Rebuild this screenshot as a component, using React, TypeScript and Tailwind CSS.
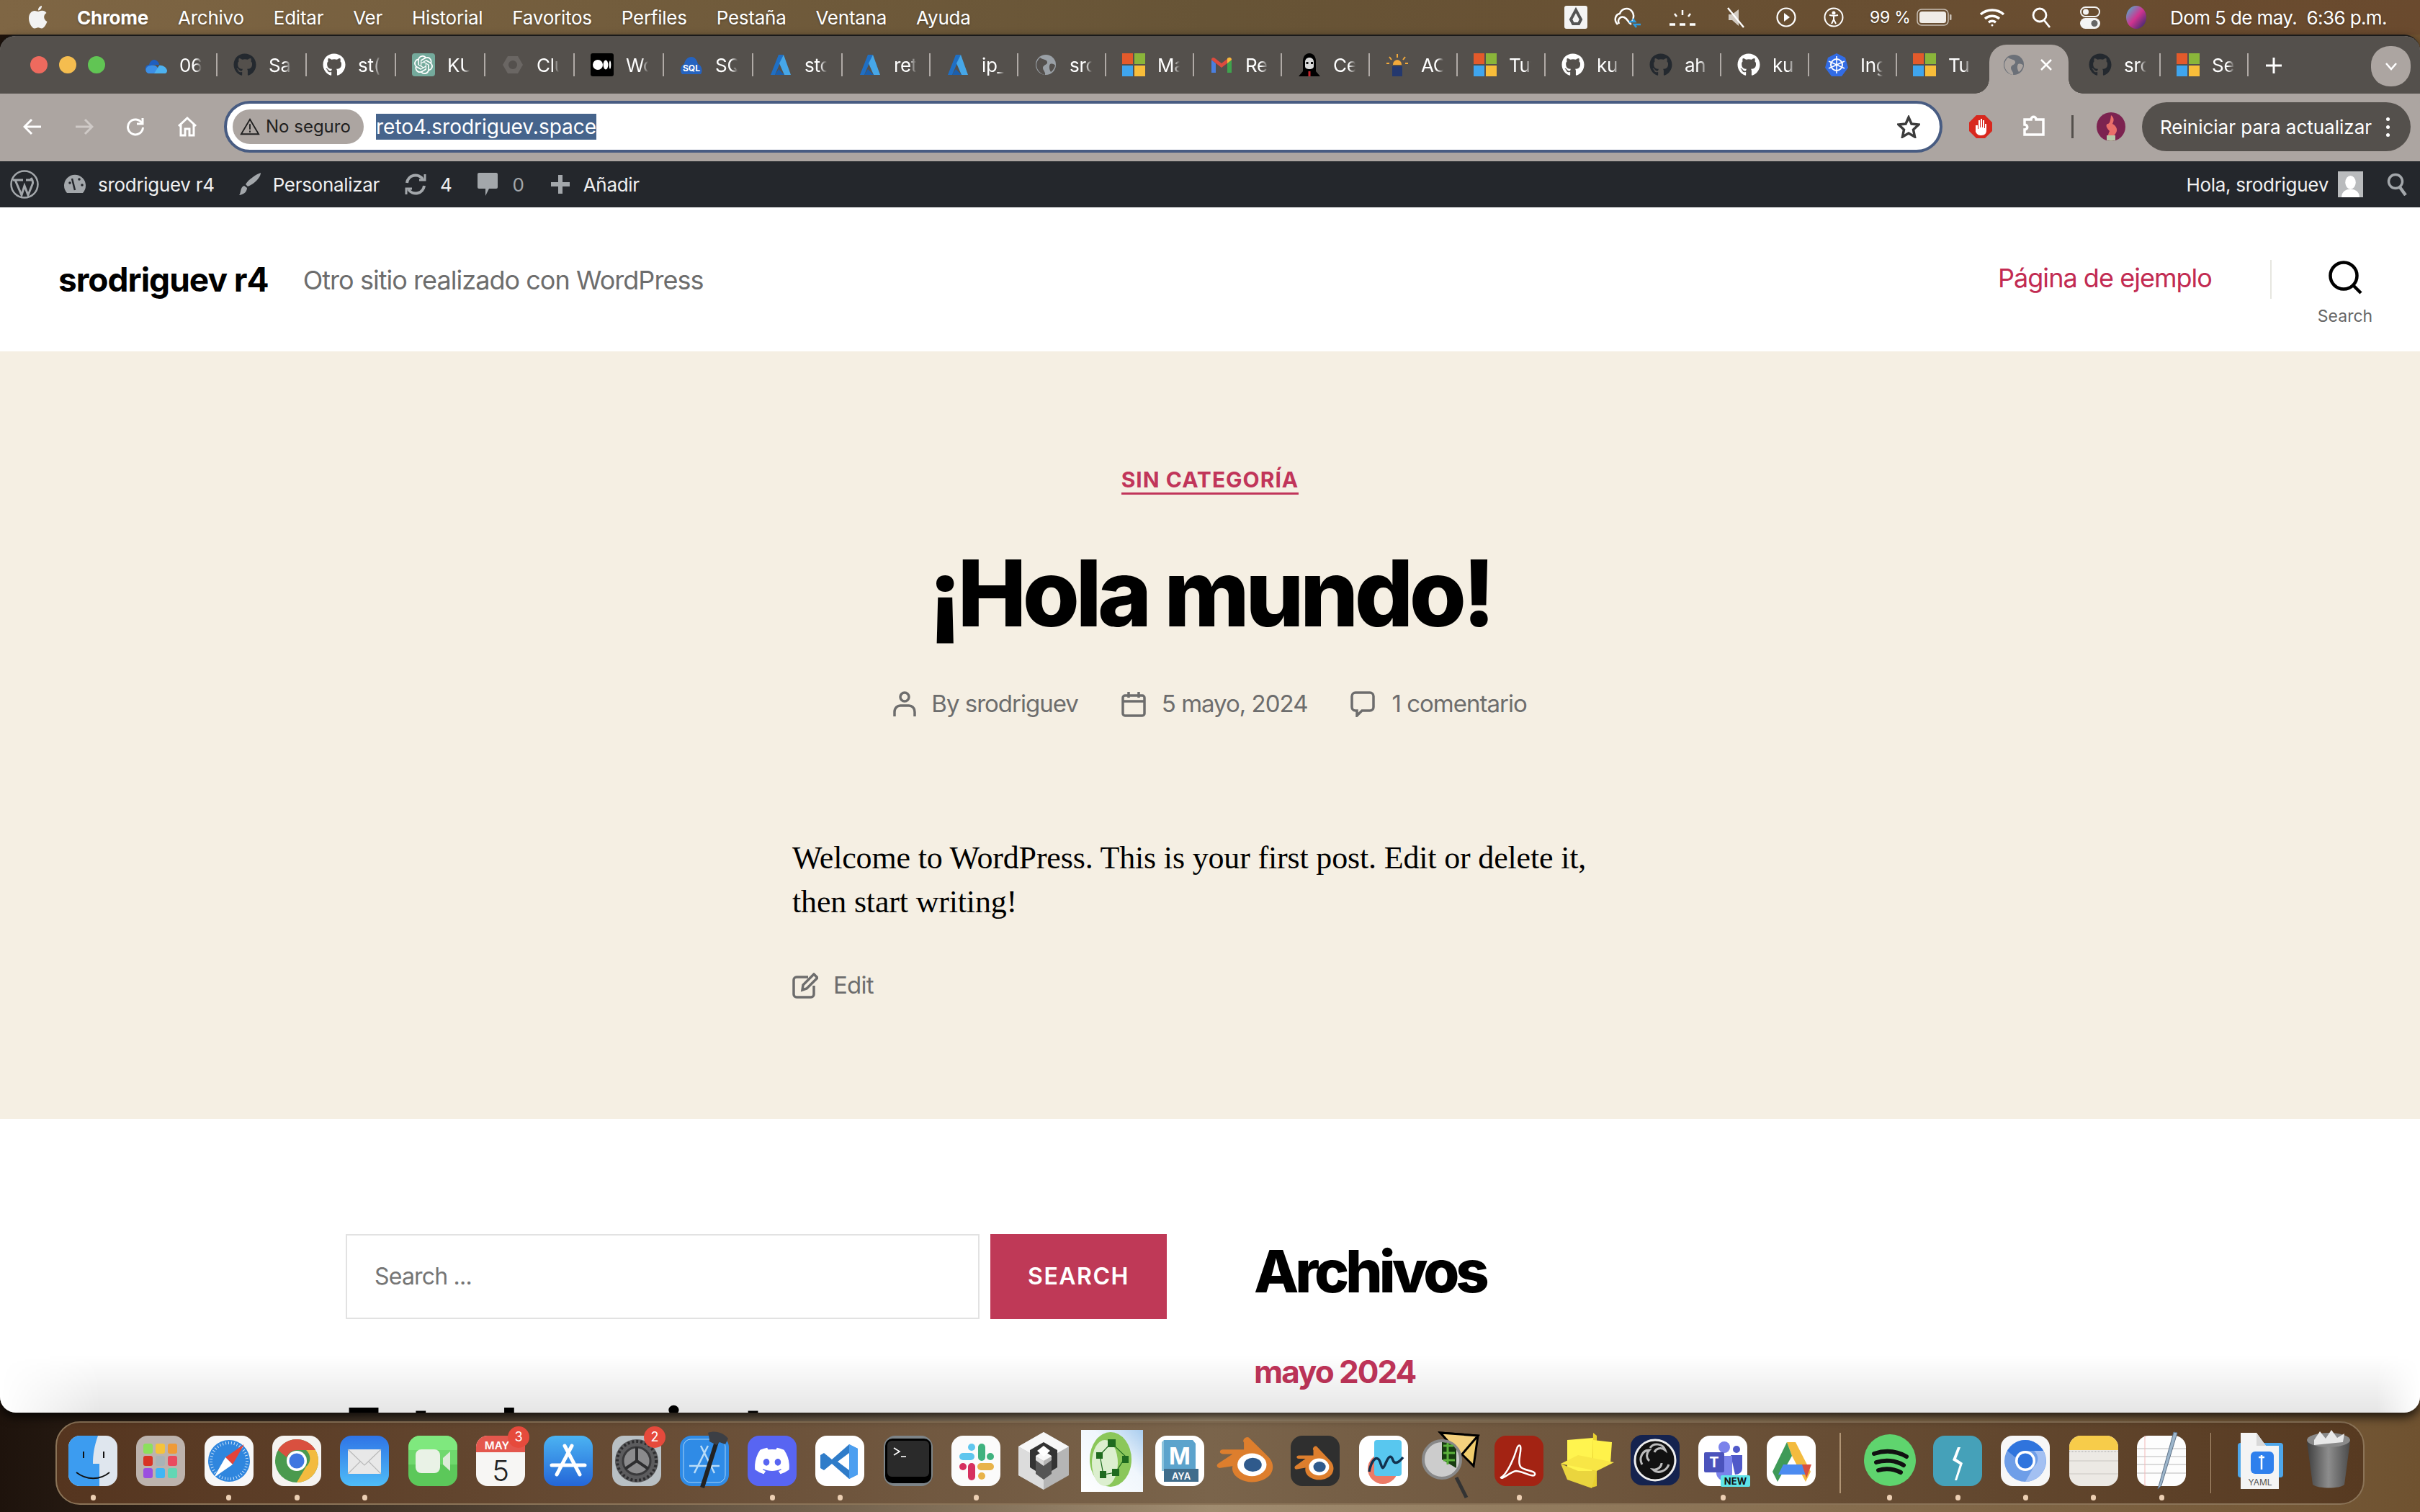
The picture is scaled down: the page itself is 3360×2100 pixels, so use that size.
import type { ReactNode } from 'react';
import { FaGithub, FaDiscord } from 'react-icons/fa';
import { SiOpenai } from 'react-icons/si';

const MS = () => (
  <svg viewBox="0 0 32 32" className="w-[32px] h-[32px]">
    <rect x="0" y="0" width="15" height="15" fill="#e35a2b" />
    <rect x="17" y="0" width="15" height="15" fill="#8ab53a" />
    <rect x="0" y="17" width="15" height="15" fill="#3fa5ee" />
    <rect x="17" y="17" width="15" height="15" fill="#f8bd3a" />
  </svg>
);
const GhWhite = () => <FaGithub className="w-[32px] h-[32px] text-white" />;
const GhDark = () => <FaGithub className="w-[32px] h-[32px] text-[#24292f]" />;
const Azure = () => (
  <svg viewBox="0 0 32 32" className="w-[32px] h-[32px]">
    <path d="M13 2h7L8 30H2z" fill="#1f6fc4" />
    <path d="M20 2l10 28h-9L14 14z" fill="#46a7e8" />
    <path d="M13 22l8 8H8z" fill="#1b5fae" />
  </svg>
);
const Globe = ({ dark }: { dark?: boolean }) => (
  <svg viewBox="0 0 32 32" className="w-[32px] h-[32px]">
    <circle cx="16" cy="16" r="14" fill={dark ? '#6b7078' : '#9aa0a6'} />
    <path d="M8 6c4 3 9 2 10 6s-6 4-6 8 4 6 3 10c-6-1-12-7-12-14 0-4 2-7 5-10z" fill={dark ? '#aca5a1' : '#54504d'} />
    <path d="M22 15c3-1 6 0 7 2-1 3-3 7-6 9-2-3-3-8-1-11z" fill={dark ? '#aca5a1' : '#54504d'} />
  </svg>
);

const TABS: { icon: ReactNode; title: string; w: string }[] = [
  {
    title: '06',
    w: 'w-[124px]',
    icon: (
      <svg viewBox="0 0 32 32" className="w-[32px] h-[32px]">
        <path d="M4 26c-4-4-2-10 3-10 1-5 6-9 10-6 3 2 4 4 4 6H12z" fill="#1f5fbf" />
        <path d="M6 28c-6-2-4-11 3-11 3-1 7-1 9 2l6 9z" fill="#3c8fe6" />
        <path d="M14 28l7-11c4-1 10 2 11 7 0 2-1 4-3 4z" fill="#4db2f0" />
      </svg>
    ),
  },
  { title: 'Sa', w: 'w-[124px]', icon: <GhDark /> },
  { title: 'st(', w: 'w-[124px]', icon: <GhWhite /> },
  {
    title: 'KU',
    w: 'w-[124px]',
    icon: (
      <div className="w-[32px] h-[32px] rounded-[4px] bg-[#74aa9c] flex items-center justify-center">
        <SiOpenai className="w-[26px] h-[26px] text-white" />
      </div>
    ),
  },
  {
    title: 'Clu',
    w: 'w-[124px]',
    icon: (
      <svg viewBox="0 0 32 32" className="w-[32px] h-[32px]">
        <path d="M9 4h14l7 12-7 12H9L2 16z" fill="#6a6663" />
        <circle cx="16" cy="16" r="6" fill="#54504d" />
      </svg>
    ),
  },
  {
    title: 'Wo',
    w: 'w-[124px]',
    icon: (
      <svg viewBox="0 0 32 32" className="w-[32px] h-[32px]">
        <rect width="32" height="32" rx="3" fill="#000" />
        <ellipse cx="10" cy="16" rx="7" ry="7" fill="#fff" />
        <ellipse cx="21" cy="16" rx="3.4" ry="6.5" fill="#fff" />
        <ellipse cx="27" cy="16" rx="1.3" ry="5.8" fill="#fff" />
      </svg>
    ),
  },
  {
    title: 'SQ',
    w: 'w-[124px]',
    icon: (
      <svg viewBox="0 0 32 32" className="w-[32px] h-[32px]">
        <path d="M3 29c-3-3-3-12 3-14 1-6 5-10 10-10s8 5 9 10c6 2 7 11 4 14z" fill="#2563c0" />
        <text x="16" y="25" textAnchor="middle" fontSize="12" fontWeight="700" fill="#fff" fontFamily="Inter, sans-serif">SQL</text>
      </svg>
    ),
  },
  { title: 'sto', w: 'w-[124px]', icon: <Azure /> },
  { title: 'ret', w: 'w-[122px]', icon: <Azure /> },
  { title: 'ip_', w: 'w-[122px]', icon: <Azure /> },
  { title: 'src', w: 'w-[122px]', icon: <Globe /> },
  { title: 'Ma', w: 'w-[122px]', icon: <MS /> },
  {
    title: 'Re',
    w: 'w-[122px]',
    icon: (
      <svg viewBox="0 0 32 32" className="w-[32px] h-[32px]">
        <path d="M2 27V9l6 5v13z" fill="#4a7fe0" />
        <path d="M24 27V14l6-5v18z" fill="#3fa34d" />
        <path d="M2 9c0-3 3-4 5-2l9 7 9-7c2-2 5-1 5 2l-14 11z" fill="#dd4b3e" />
        <path d="M24 14l6-5c0-2-2-4-4-3l-2 1z" fill="#f4b93e" />
      </svg>
    ),
  },
  {
    title: 'Ce',
    w: 'w-[122px]',
    icon: (
      <svg viewBox="0 0 32 32" className="w-[32px] h-[32px]">
        <path d="M16 0c6 0 9 5 9 11v14l6 7H1l6-7V11C7 5 10 0 16 0z" fill="#000" />
        <path d="M10 12c0-4 3-6 6-6s6 2 6 6v6c0 3-3 4-6 4s-6-1-6-4z" fill="#d9d9d9" />
        <rect x="11.5" y="12" width="3" height="3" fill="#111" />
        <rect x="18" y="12" width="3" height="3" fill="#111" />
        <rect x="14.5" y="25" width="3" height="7" fill="#c9252c" />
      </svg>
    ),
  },
  {
    title: 'AC',
    w: 'w-[122px]',
    icon: (
      <svg viewBox="0 0 32 32" className="w-[32px] h-[32px]">
        <rect x="9" y="18" width="14" height="14" fill="#24386e" />
        <path d="M10 16c0-9 12-9 12 0z" fill="#f2a93b" />
        <path d="M16 1v5M5 5l3 4M27 5l-3 4M1 14h4M27 14h4" stroke="#f2a93b" strokeWidth="2" />
      </svg>
    ),
  },
  { title: 'Tut', w: 'w-[122px]', icon: <MS /> },
  { title: 'ku', w: 'w-[122px]', icon: <GhWhite /> },
  { title: 'ah', w: 'w-[122px]', icon: <GhDark /> },
  { title: 'ku', w: 'w-[122px]', icon: <GhWhite /> },
  {
    title: 'Ing',
    w: 'w-[122px]',
    icon: (
      <svg viewBox="0 0 32 32" className="w-[32px] h-[32px]">
        <path d="M16 0l12 6 4 14-9 12H9L0 20 4 6z" fill="#326ce5" />
        <circle cx="16" cy="16" r="8" fill="none" stroke="#fff" strokeWidth="2" />
        <path d="M16 4v24M5 11l22 10M27 11L5 21" stroke="#fff" strokeWidth="1.6" />
      </svg>
    ),
  },
];

const DOCK_TILE = { x: 13, y: 16, width: 68, height: 70, rx: 16 };

const Badge = ({ n, x }: { n: string; x: number }) => (
  <g>
    <circle cx={x} cy="18" r="15" fill="#e64a3c" />
    <text x={x} y="24" textAnchor="middle" fontSize="18" fill="#fff" fontFamily="Inter, sans-serif">{n}</text>
  </g>
);

const BlenderGlyph = ({ sx, sy, ox, oy }: { sx: number; sy: number; ox: number; oy: number }) => (
  <g transform={`translate(${ox} ${oy}) scale(${sx} ${sy})`}>
    <path d="M40 12l24 30c6 8 8 18 3 28-6 10-20 15-31 11-12-4-18-14-16-24L5 60c-4 1-6-4-3-7l18-15H8c-5 0-5-7 0-7h26L34 20c-3-4 3-11 6-8z" fill="#dd7e2d" />
    <circle cx="44" cy="55" r="18" fill="#fff" />
    <circle cx="45" cy="55" r="11" fill="#2f5a8c" />
  </g>
);

const DOCK: { key: string; dot?: boolean; art: ReactNode }[] = [
  {
    key: 'finder',
    dot: true,
    art: (
      <>
        <rect {...DOCK_TILE} fill="#dfe6ee" />
        <path d="M29 16h25c-5 14-7 26-7 39h9v31H29a16 16 0 0 1-16-16V32a16 16 0 0 1 16-16z" fill="#3c9cf0" />
        <path d="M24 67c14 11 33 11 46 0" fill="none" stroke="#111" strokeWidth="1.8" />
        <rect x="33" y="38" width="2" height="9" fill="#111" />
        <rect x="61" y="38" width="2" height="9" fill="#111" />
      </>
    ),
  },
  {
    key: 'launchpad',
    art: (
      <>
        <rect {...DOCK_TILE} fill="#bdb3ad" />
        {[
          ['#8ce05c', 23, 27], ['#f5c33b', 40, 27], ['#ef9a36', 57, 27],
          ['#d83325', 23, 44], ['#a9b3b6', 40, 44], ['#ea4a5f', 57, 44],
          ['#9b4fe0', 23, 61], ['#3fb6f5', 40, 61], ['#62d6b4', 57, 61],
        ].map(([c, x, y]) => (
          <rect key={`${x}-${y}`} x={x as number} y={y as number} width="13" height="14" rx="3" fill={c as string} />
        ))}
      </>
    ),
  },
  {
    key: 'safari',
    dot: true,
    art: (
      <>
        <rect {...DOCK_TILE} fill="#f7f7f7" />
        <circle cx="47" cy="51" r="29" fill="#2f86de" />
        <circle cx="47" cy="51" r="25" fill="none" stroke="#cfe4f8" strokeWidth="4" strokeDasharray="1 3" />
        <path d="M68 28L42 46l10 10z" fill="#e5433a" />
        <path d="M26 74l16-28 10 10z" fill="#fff" />
      </>
    ),
  },
  {
    key: 'chrome',
    dot: true,
    art: (
      <>
        <rect {...DOCK_TILE} fill="#f5f3f0" />
        <circle cx="47" cy="51" r="30" fill="#4a9a4e" />
        <path d="M47 21a30 30 0 0 1 26 15H47a15 15 0 0 0-14 10L21 36a30 30 0 0 1 26-15z" fill="#d9503f" />
        <path d="M73 36a30 30 0 0 1-26 45l13-22a15 15 0 0 0 0-23z" fill="#f3bb3f" />
        <circle cx="47" cy="51" r="14" fill="#fff" />
        <circle cx="47" cy="51" r="10.5" fill="#3f76e0" />
      </>
    ),
  },
  {
    key: 'mail',
    dot: true,
    art: (
      <>
        <defs>
          <linearGradient id="mailg" x1="0" y1="0" x2="0" y2="1">
            <stop offset="0" stopColor="#2f74e6" />
            <stop offset="1" stopColor="#4fbdf8" />
          </linearGradient>
        </defs>
        <rect {...DOCK_TILE} fill="url(#mailg)" />
        <rect x="24" y="35" width="46" height="34" rx="2" fill="#e8e8e8" />
        <path d="M24 35l23 22 23-22M24 69l17-17M70 69L53 52" fill="none" stroke="#b9b9b9" strokeWidth="1.2" />
      </>
    ),
  },
  {
    key: 'facetime',
    art: (
      <>
        <rect {...DOCK_TILE} fill="#5cc85a" />
        <rect {...DOCK_TILE} height="34" fill="#7fe87e" />
        <rect x="13" y="36" width="68" height="20" fill="#6fd86d" />
        <rect x="23" y="35" width="34" height="33" rx="8" fill="#e9f2e6" />
        <path d="M61 47l10-9v27l-10-9z" fill="#dcebd8" />
      </>
    ),
  },
  {
    key: 'calendar',
    art: (
      <>
        <rect {...DOCK_TILE} fill="#f7f6f4" />
        <path d="M13 39V32a16 16 0 0 1 16-16h36a16 16 0 0 1 16 16v7z" fill="#e4574d" />
        <text x="42" y="35" textAnchor="middle" fontSize="15" fontWeight="600" fill="#fff" fontFamily="Inter, sans-serif">MAY</text>
        <text x="47" y="79" textAnchor="middle" fontSize="40" fontWeight="300" fill="#222" fontFamily="Inter, sans-serif">5</text>
        <Badge n="3" x={72} />
      </>
    ),
  },
  {
    key: 'appstore',
    art: (
      <>
        <defs>
          <linearGradient id="asg" x1="0" y1="0" x2="0" y2="1">
            <stop offset="0" stopColor="#4bb3f2" />
            <stop offset="1" stopColor="#2466d8" />
          </linearGradient>
        </defs>
        <rect {...DOCK_TILE} fill="url(#asg)" />
        <path d="M52 30L31 70M42 30l21 40M24 57h46" stroke="#fff" strokeWidth="5" strokeLinecap="round" fill="none" />
      </>
    ),
  },
  {
    key: 'settings',
    art: (
      <>
        <rect {...DOCK_TILE} fill="#b9c0c4" />
        <circle cx="47" cy="51" r="30" fill="#5c5c5e" />
        <circle cx="47" cy="51" r="27" fill="none" stroke="#2d2d2f" strokeWidth="4" strokeDasharray="3 3" />
        <circle cx="47" cy="51" r="19" fill="#8b8b8d" stroke="#3a3a3c" strokeWidth="3" />
        <path d="M47 51V32M47 51L31 62M47 51l16 11" stroke="#2d2d2f" strokeWidth="4" />
        <Badge n="2" x={72} />
      </>
    ),
  },
  {
    key: 'xcode',
    art: (
      <>
        <rect {...DOCK_TILE} fill="#2f8be6" />
        <rect x="18" y="21" width="58" height="60" rx="10" fill="none" stroke="#a8d3f7" strokeWidth="1" />
        <path d="M52 30L33 68M42 30l19 38M26 58h42" stroke="#b8dcf8" strokeWidth="2.5" fill="none" />
        <path d="M44 88L66 18" stroke="#222" strokeWidth="6" />
        <path d="M52 12c10-4 22 0 28 8l-4 8-8-3-4 4-10-5c0-5-1-8-2-12z" fill="#3c3f45" />
      </>
    ),
  },
  {
    key: 'discord',
    dot: true,
    art: (
      <>
        <rect {...DOCK_TILE} fill="#5865f2" />
        <foreignObject x="21" y="25" width="52" height="52">
          <FaDiscord className="w-[52px] h-[52px] text-white" />
        </foreignObject>
      </>
    ),
  },
  {
    key: 'vscode',
    dot: true,
    art: (
      <>
        <rect {...DOCK_TILE} fill="#fff" />
        <path d="M60 28l12 6v36l-12 6-24-21-11 9-5-3V43l5-3 11 9z" fill="#2f7cc9" />
        <path d="M60 28l12 6v36l-12 6z" fill="#4c9ff0" />
        <path d="M60 40v24L44 52z" fill="#fff" />
      </>
    ),
  },
  {
    key: 'terminal',
    art: (
      <>
        <rect {...DOCK_TILE} fill="#7d8488" />
        <rect x="15" y="20" width="64" height="62" rx="10" fill="#000" />
        <rect x="18" y="23" width="58" height="50" rx="6" fill="#2a2a2a" />
        <path d="M27 33l8 5-8 5" fill="none" stroke="#fff" strokeWidth="1.6" />
        <path d="M37 45h7" stroke="#fff" strokeWidth="1.6" />
      </>
    ),
  },
  {
    key: 'slack',
    dot: true,
    art: (
      <>
        <rect {...DOCK_TILE} fill="#fbfbfb" />
        <rect x="24" y="40" width="21" height="10" rx="5" fill="#5fc6ee" />
        <rect x="36" y="27" width="10" height="10" rx="5" fill="#5fc6ee" />
        <rect x="50" y="27" width="10" height="24" rx="5" fill="#3fb27f" />
        <rect x="62" y="40" width="10" height="10" rx="5" fill="#3fb27f" />
        <rect x="49" y="54" width="23" height="10" rx="5" fill="#e8b34a" />
        <rect x="50" y="67" width="10" height="10" rx="5" fill="#e8b34a" />
        <rect x="36" y="54" width="10" height="24" rx="5" fill="#d6305f" />
        <rect x="24" y="54" width="10" height="10" rx="5" fill="#d6305f" />
      </>
    ),
  },
  {
    key: 'unity',
    art: (
      <>
        <path d="M47 11l35 20v40L47 91 12 71V31z" fill="#b5b5b5" />
        <path d="M47 11l35 20-35 20-35-20z" fill="#f7f7f7" />
        <path d="M12 31l35 20v40L12 71z" fill="#dcdcdc" />
        <path d="M47 25l19 11v24l-8 5V44l-11-7-11 7v21l-8-5V36z" fill="#333" />
        <path d="M47 30l9 7-9 8-9-8z" fill="#fff" />
        <path d="M36 50l11 8 11-8v19l-11 8-11-8z" fill="#555" />
      </>
    ),
  },
  {
    key: 'mesh',
    art: (
      <>
        <defs>
          <linearGradient id="meshbg" x1="0" y1="1" x2="1" y2="0">
            <stop offset="0" stopColor="#ffffff" />
            <stop offset="0.6" stopColor="#f0f6fc" />
            <stop offset="1" stopColor="#a9cdef" />
          </linearGradient>
        </defs>
        <rect x="4" y="8" width="86" height="86" fill="url(#meshbg)" />
        <ellipse cx="45" cy="49" rx="29" ry="38" fill="#8bc75a" />
        <ellipse cx="37" cy="54" rx="18" ry="32" fill="#dcefcf" />
        <path d="M46 26L30 43l5 27 17-3 14-22z" fill="none" stroke="#1f6b1f" strokeWidth="1.2" />
        <rect x="41" y="21" width="11" height="11" fill="#1f6b1f" />
        <rect x="25" y="39" width="9" height="9" fill="#1f6b1f" />
        <rect x="61" y="44" width="9" height="10" fill="#1f6b1f" />
        <rect x="30" y="65" width="9" height="10" fill="#1f6b1f" />
        <rect x="47" y="62" width="10" height="10" fill="#1f6b1f" />
      </>
    ),
  },
  {
    key: 'maya',
    art: (
      <>
        <rect {...DOCK_TILE} fill="#fff" />
        <path d="M25 22h40l4 5v36H25z" fill="#5ca3cc" />
        <path d="M25 22l-3 3v40h3z" fill="#8cc3dc" />
        <rect x="25" y="62" width="48" height="18" fill="#3f6d8c" />
        <text x="47" y="56" textAnchor="middle" fontSize="32" fontWeight="700" fill="#fff" fontFamily="Inter, sans-serif">M</text>
        <text x="49" y="77" textAnchor="middle" fontSize="13" fontWeight="600" fill="#fff" fontFamily="Inter, sans-serif">AYA</text>
      </>
    ),
  },
  { key: 'blender', art: <BlenderGlyph sx={1.12} sy={0.88} ox={4} oy={8} /> },
  {
    key: 'blender2',
    art: (
      <>
        <rect {...DOCK_TILE} fill="#2f2f2f" />
        <BlenderGlyph sx={0.78} sy={0.66} ox={18} oy={23} />
      </>
    ),
  },
  {
    key: 'freeform',
    art: (
      <>
        <rect {...DOCK_TILE} fill="#fff" />
        <circle cx="46" cy="62" r="21" fill="#ec7a66" />
        <rect x="34" y="22" width="38" height="50" rx="4" fill="#58c7ef" />
        <path d="M27 66c4-20 12-22 15-14s3 14 8 2 8-10 10-4 8 4 14-4" fill="none" stroke="#12324f" strokeWidth="3.5" />
      </>
    ),
  },
  {
    key: 'magnifier',
    art: (
      <>
        <path d="M32 12l52 4-6 42-46-46z" fill="#f0cc6c" stroke="#000" strokeWidth="3" />
        <path d="M32 12l52 4-24 28z" fill="#f4d17e" stroke="#000" strokeWidth="3" />
        <circle cx="34" cy="49" r="26" fill="#ccc" stroke="#888" strokeWidth="4" />
        <path d="M34 25a24 24 0 0 1 20 10v26L34 49z" fill="#173c10" />
        <path d="M36 30h14M36 40h16M36 50h16M42 26v30" stroke="#5cb23c" strokeWidth="3" />
        <path d="M54 74l14 28" stroke="#333" strokeWidth="5" />
      </>
    ),
  },
  {
    key: 'acrobat',
    dot: true,
    art: (
      <>
        <rect {...DOCK_TILE} fill="#a32313" />
        <path d="M22 74c8-4 18-26 22-40 1-4 4-6 5-3 2 8-5 20 0 28 4 6 22 5 20 11-2 5-14-4-26-5-8 1-20 13-21 9z" fill="none" stroke="#fff" strokeWidth="2.5" />
      </>
    ),
  },
  {
    key: 'sticky',
    art: (
      <>
        <path d="M19 22l36-3 2 62-38-4z" fill="#fff44f" />
        <path d="M55 12l5 4v70l-7 2z" fill="#e8d030" />
        <path d="M55 22l26 3-2 30-24-2z" fill="#fff24a" />
        <path d="M10 55l24-12 50 10-24 12z" fill="#f8e646" />
        <path d="M10 55l24 10 26 0-7 24-34-12z" fill="#ead53e" />
      </>
    ),
  },
  {
    key: 'obs',
    art: (
      <>
        <rect x="13" y="15" width="68" height="70" rx="16" fill="#15234f" />
        <circle cx="47" cy="50" r="28" fill="#111" stroke="#eee" strokeWidth="3" />
        <path d="M40 33c5-8 18-6 21 3-6-5-13-2-15 3M66 56c-3 9-15 14-22 7 7 1 12-4 12-9M29 56c-5-8 0-20 10-20-5 5-4 12 0 15" fill="none" stroke="#bbb" strokeWidth="3" />
      </>
    ),
  },
  {
    key: 'teams',
    dot: true,
    art: (
      <>
        <rect {...DOCK_TILE} fill="#fff" />
        <circle cx="49" cy="32" r="8" fill="#7b83eb" />
        <circle cx="66" cy="35" r="5" fill="#5059c9" />
        <path d="M58 43h16v18c0 6-5 9-10 9z" fill="#5059c9" />
        <path d="M38 44h22v24c0 8-6 11-11 11s-11-5-11-11z" fill="#7b83eb" />
        <rect x="21" y="39" width="28" height="28" rx="2" fill="#4b53bc" />
        <text x="35" y="60" textAnchor="middle" fontSize="20" fontWeight="700" fill="#fff" fontFamily="Inter, sans-serif">T</text>
        <rect x="44" y="71" width="41" height="16" rx="2" fill="#5fe4e8" />
        <text x="64.5" y="84" textAnchor="middle" fontSize="13" fontWeight="700" fill="#111" fontFamily="Inter, sans-serif">NEW</text>
      </>
    ),
  },
  {
    key: 'drive',
    art: (
      <>
        <rect {...DOCK_TILE} fill="#fff" />
        <path d="M41 25h12l21 41-7 14-19-36z" fill="#f3bb3f" />
        <path d="M41 25l7 19-20 36-7-14z" fill="#3f9a58" />
        <path d="M36 56h38l-7 14H29z" fill="#4c8bf0" />
        <path d="M62 56h13l-7 19z" fill="#d9503f" />
      </>
    ),
  },
];

const DOCK_MID: { key: string; art: ReactNode }[] = [
  {
    key: 'spotify',
    art: (
      <>
        <circle cx="47" cy="50" r="36" fill="#5fd46e" />
        <path d="M25 41c15-5 31-4 45 4M28 53c12-4 27-3 38 4M31 64c10-3 21-2 31 3" fill="none" stroke="#111" strokeWidth="6" strokeLinecap="round" />
      </>
    ),
  },
  {
    key: 'bolt',
    art: (
      <>
        <rect {...DOCK_TILE} fill="#45a1b9" />
        <path d="M47 32l-7 18 10 6-7 22 3 0 8-24-9-6 6-16z" fill="#fff" />
      </>
    ),
  },
  {
    key: 'chromium',
    art: (
      <>
        <rect {...DOCK_TILE} fill="#f7f7f7" />
        <circle cx="47" cy="51" r="29" fill="#6e9ee8" />
        <path d="M47 22a29 29 0 0 1 25 15H47a14 14 0 0 0-14 9L22 37a29 29 0 0 1 25-15z" fill="#2f74dd" />
        <path d="M72 37a29 29 0 0 1-25 43l12-21a14 14 0 0 0 0-22z" fill="#a3c0f2" />
        <circle cx="47" cy="51" r="14" fill="#fff" />
        <circle cx="47" cy="51" r="10.5" fill="#2f74dd" />
      </>
    ),
  },
  {
    key: 'notes',
    art: (
      <>
        <rect {...DOCK_TILE} fill="#ece9e4" />
        <path d="M13 36V32a16 16 0 0 1 16-16h36a16 16 0 0 1 16 16v4z" fill="#f7cc4a" />
        <path d="M13 38h68" stroke="#bbb" strokeWidth="1.5" strokeDasharray="1 1" />
        <path d="M13 51h68M13 69h68" stroke="#d5d2cd" strokeWidth="1.5" />
      </>
    ),
  },
  {
    key: 'textedit',
    art: (
      <>
        <rect {...DOCK_TILE} fill="#fdfdfd" />
        <path d="M13 34h68M13 45h68M13 56h68M13 68h68" stroke="#cfcfcf" strokeWidth="1.5" />
        <path d="M24 16v70" stroke="#f3b9b9" strokeWidth="1" />
        <path d="M42 90l2-7 20-72 5 1-22 73z" fill="#9db6cc" stroke="#5d7186" strokeWidth="1" />
      </>
    ),
  },
];

const DOCK_END: { key: string; art: ReactNode }[] = [
  {
    key: 'yaml',
    art: (
      <>
        <rect x="16" y="26" width="63" height="48" rx="4" fill="#4da6ea" />
        <path d="M20 12h22l13 18h18v60H20z" fill="#f4f4f4" />
        <path d="M42 12l13 18H42z" fill="#d8d8d8" />
        <rect x="34" y="38" width="32" height="31" rx="6" fill="#2f80ed" />
        <path d="M49 43v20M45 46h8" stroke="#fff" strokeWidth="2.5" />
        <text x="47" y="85" textAnchor="middle" fontSize="12" fill="#555" fontFamily="Inter, sans-serif">YAML</text>
      </>
    ),
  },
  {
    key: 'trash',
    art: (
      <>
        <defs>
          <linearGradient id="trg" x1="0" y1="0" x2="1" y2="0">
            <stop offset="0" stopColor="#3f3f3f" />
            <stop offset="0.5" stopColor="#8d8d8d" />
            <stop offset="1" stopColor="#4a4a4a" />
          </linearGradient>
        </defs>
        <path d="M17 24h60l-8 60c-6 6-36 6-44 0z" fill="url(#trg)" />
        <ellipse cx="47" cy="22" rx="30" ry="10" fill="#8a8a8a" />
        <path d="M27 22l8-12 8 10 8-12 8 11 10-6-2 12-40 4z" fill="#e8e8e8" />
      </>
    ),
  },
];

const DockCell = ({ art, dot }: { art: ReactNode; dot?: boolean }) => (
  <div className="w-[94.3px] shrink-0 flex flex-col items-center">
    <svg viewBox="0 0 94 96" className="w-[94px] h-[96px] mt-[2px] overflow-visible block">{art}</svg>
    {dot && <div className="w-[7px] h-[8px] mt-[2px] rounded-full bg-[#eccfb3]" />}
  </div>
);

const DockSep = () => (
  <div className="w-[43px] shrink-0 flex justify-center pt-[14px]">
    <div className="w-[1.5px] h-[84px] bg-[#b09474]" />
  </div>
);

const TabTitle = ({ children }: { children: ReactNode }) => (
  <span className="ml-[17px] w-[31px] overflow-hidden whitespace-nowrap tracking-[-0.3px] [mask-image:linear-gradient(to_right,#000_70%,transparent)]">{children}</span>
);

function MenuBar() {
  return (
    <div className="h-[48px] shrink-0 flex items-center text-white text-[26px] tracking-[-0.25px] font-['Inter',sans-serif] pl-[40px] pr-[38px] bg-gradient-to-r from-[#7f6644] via-[#675436] to-[#6a4a2e] [text-shadow:0_1px_3px_rgba(0,0,0,0.35)]">
      <svg viewBox="0 0 26 32" className="w-[26px] h-[32px] fill-[#f2f2f2]">
        <path d="M18 0c.3 3-2 6.500-5 6.500C12.700 3.500 15 .5 18 0zM13 8c1.500 0 3-1.200 5.500-1.200 2.500 0 4.500 1.200 6 3.200-5 3-4 9.500 1 12-1.500 4-4.500 9.500-7.500 9.500-2 0-2.800-1.300-5-1.300s-3 1.300-5 1.300C4.500 31.500 0 24 0 17.500 0 11 4 7 8 7c2 0 3.500 1 5 1z" />
      </svg>
      <span className="ml-[41px] font-bold">Chrome</span>
      <span className="ml-[41px]">Archivo</span>
      <span className="ml-[41px]">Editar</span>
      <span className="ml-[41px]">Ver</span>
      <span className="ml-[41px]">Historial</span>
      <span className="ml-[41px]">Favoritos</span>
      <span className="ml-[41px]">Perfiles</span>
      <span className="ml-[41px]">Pestaña</span>
      <span className="ml-[41px]">Ventana</span>
      <span className="ml-[41px]">Ayuda</span>
      <div className="flex-1" />
      <svg viewBox="0 0 32 32" className="w-[32px] h-[32px]">
        <rect width="32" height="32" rx="3" fill="#f4f4f4" />
        <path d="M16 6l7 13-3 6h-8l-3-6z" fill="none" stroke="#555" strokeWidth="4" />
      </svg>
      <svg viewBox="0 0 38 32" className="w-[38px] h-[32px] ml-[36px]">
        <path d="M6 26C0 20 3 12 9 11c2-7 12-10 17-3 4 5 2 10 0 14" fill="none" stroke="#fff" strokeWidth="2.5" />
        <path d="M8 25c-3-6 2-11 7-9s6 8 10 10" fill="none" stroke="#fff" strokeWidth="2.5" />
        <path d="M22 22h8l-3-4M38 26h-9l3 4" fill="none" stroke="#2f9be0" strokeWidth="2.5" />
      </svg>
      <svg viewBox="0 0 40 28" className="w-[40px] h-[28px] ml-[38px]" stroke="#fff" strokeWidth="2.5" fill="none">
        <path d="M20 4v7M9 9l3 4M31 9l-3 4" />
        <path d="M2 24h8M16 24h8M30 24h8" strokeWidth="3.5" />
      </svg>
      <svg viewBox="0 0 28 30" className="w-[28px] h-[30px] ml-[40px]" fill="none" stroke="#fff" strokeWidth="2.4">
        <path d="M4 11v8h5l9 8V4l-9 7z" fill="#fff" fillOpacity="0.7" stroke="none" />
        <path d="M3 2l22 27" />
      </svg>
      <svg viewBox="0 0 28 30" className="w-[28px] h-[30px] ml-[42px]" fill="none" stroke="#fff" strokeWidth="2.2">
        <circle cx="14" cy="15" r="12.5" />
        <path d="M11 9l8 6-8 6z" fill="#fff" stroke="none" />
      </svg>
      <svg viewBox="0 0 28 30" className="w-[28px] h-[30px] ml-[38px]" fill="none" stroke="#fff" strokeWidth="2">
        <circle cx="14" cy="15" r="12.5" />
        <circle cx="14" cy="9" r="1.5" fill="#fff" />
        <path d="M8 12l6 1 6-1M14 13v5l-3 6M14 18l3 6" />
      </svg>
      <span className="ml-[36px] w-[55px] text-[23px] whitespace-nowrap">99 %</span>
      <svg viewBox="0 0 50 24" className="w-[50px] h-[24px] ml-[10px]">
        <rect x="1" y="1" width="43" height="22" rx="6" fill="none" stroke="#c9c0b5" strokeWidth="1.5" />
        <rect x="4" y="4" width="37" height="16" rx="3.5" fill="#f0ece6" />
        <rect x="46" y="8" width="2.5" height="8" rx="1" fill="#c9c0b5" />
      </svg>
      <svg viewBox="0 0 36 28" className="w-[36px] h-[28px] ml-[37px]" fill="none" stroke="#fff" strokeWidth="3.5">
        <path d="M2 10c9-8 23-8 32 0M8 16c6-5 14-5 20 0M13 21c3-2 7-2 10 0" />
        <circle cx="18" cy="25" r="1.5" fill="#fff" stroke="none" />
      </svg>
      <svg viewBox="0 0 30 30" className="w-[30px] h-[30px] ml-[36px]" fill="none" stroke="#fff" strokeWidth="2.8">
        <circle cx="12" cy="12" r="9" />
        <path d="M18 19l8 10" />
      </svg>
      <svg viewBox="0 0 28 32" className="w-[28px] h-[32px] ml-[38px]">
        <rect x="1" y="2" width="26" height="13" rx="6.5" fill="none" stroke="#f4f4f4" strokeWidth="2" />
        <circle cx="8" cy="8.5" r="4" fill="#f4f4f4" />
        <rect x="0" y="17" width="28" height="15" rx="7.5" fill="#f4f4f4" />
        <circle cx="20" cy="24.5" r="4.5" fill="#666" />
      </svg>
      <svg viewBox="0 0 28 32" className="w-[28px] h-[32px] ml-[36px]">
        <defs>
          <linearGradient id="siri" x1="0" y1="0" x2="1" y2="1">
            <stop offset="0" stopColor="#3ec1d3" />
            <stop offset="0.5" stopColor="#d0338f" />
            <stop offset="1" stopColor="#1f2a6b" />
          </linearGradient>
        </defs>
        <ellipse cx="14" cy="16" rx="14" ry="16" fill="url(#siri)" />
      </svg>
      <span className="ml-[33px] w-[309px] whitespace-nowrap tracking-[-0.6px]">Dom 5 de may.&nbsp; 6:36 p.m.</span>
    </div>
  );
}

function TabStrip() {
  return (
    <div className="h-[80px] shrink-0 flex bg-[#54504c] pl-[178px] font-['Inter',sans-serif] text-white text-[26px]">
      <div className="absolute left-[42px] top-[28px] flex gap-[16px]">
        <div className="w-[24px] h-[24px] rounded-full bg-[#ee6a5e]" />
        <div className="w-[24px] h-[24px] rounded-full bg-[#f5bd4f]" />
        <div className="w-[24px] h-[24px] rounded-full bg-[#61c554]" />
      </div>
      {TABS.map((t, i) => (
        <div key={i} className={`${t.w} shrink-0 flex items-center relative pl-[22px] mt-[12px] h-[56px]`}>
          {t.icon}
          <TabTitle>{t.title}</TabTitle>
          <div className="absolute right-0 top-[12px] w-[2.5px] h-[32px] bg-[#b0aaa6]" />
        </div>
      ))}
      <div className="w-[128px] shrink-0 flex items-center pl-[22px] mt-[12px] h-[56px]">
        <MS />
        <TabTitle>Tu</TabTitle>
      </div>
      {/* active tab */}
      <div className="w-[110px] shrink-0 relative mt-[12px] h-[68px] rounded-t-[24px] bg-[#aca5a1] flex items-start pt-[12px] pl-[18px]">
        <div className="absolute -left-[20px] bottom-0 w-[20px] h-[20px] bg-[radial-gradient(circle_at_0_0,transparent_19.5px,#aca5a1_20px)]" />
        <div className="absolute -right-[20px] bottom-0 w-[20px] h-[20px] bg-[radial-gradient(circle_at_100%_0,transparent_19.5px,#aca5a1_20px)]" />
        <Globe dark />
        <svg viewBox="0 0 18 18" className="w-[18px] h-[18px] ml-[20px] mt-[7px]" stroke="#fff" strokeWidth="2.5">
          <path d="M2 2l14 14M16 2L2 16" />
        </svg>
      </div>
      <div className="w-[128px] shrink-0 flex items-center relative pl-[28px] mt-[12px] h-[56px]">
        <GhDark />
        <TabTitle>src</TabTitle>
        <div className="absolute right-0 top-[12px] w-[2.5px] h-[32px] bg-[#b0aaa6]" />
      </div>
      <div className="w-[122px] shrink-0 flex items-center relative pl-[22px] mt-[12px] h-[56px]">
        <MS />
        <TabTitle>Se</TabTitle>
        <div className="absolute right-0 top-[12px] w-[2.5px] h-[32px] bg-[#b0aaa6]" />
      </div>
      <div className="ml-[24px] mt-[30px]">
        <svg viewBox="0 0 22 22" className="w-[22px] h-[22px]" stroke="#fff" strokeWidth="3">
          <path d="M11 0v22M0 11h22" />
        </svg>
      </div>
      <div className="absolute left-[3292px] top-[14px] w-[55px] h-[56px] rounded-[26px] bg-[#aca5a1] flex items-center justify-center">
        <svg viewBox="0 0 16 12" className="w-[16px] h-[12px]" fill="none" stroke="#fff" strokeWidth="2.5">
          <path d="M1 2l7 8 7-8" />
        </svg>
      </div>
    </div>
  );
}

function Toolbar() {
  return (
    <div className="h-[92px] shrink-0 flex items-center bg-[#aca5a1] rounded-t-[14px] font-['Inter',sans-serif] relative">
      <svg viewBox="0 0 26 26" className="w-[26px] h-[26px] ml-[32px]" fill="none" stroke="#fff" strokeWidth="3">
        <path d="M25 13H3M12 3L2 13l10 10" />
      </svg>
      <svg viewBox="0 0 26 26" className="w-[26px] h-[26px] ml-[46px]" fill="none" stroke="#cfcac7" strokeWidth="3">
        <path d="M1 13h22M14 3l10 10-10 10" />
      </svg>
      <svg viewBox="0 0 26 26" className="w-[26px] h-[26px] ml-[45px]" fill="none" stroke="#fff" strokeWidth="3">
        <path d="M22 8a10.5 10.5 0 1 0 1.5 6" />
        <path d="M23 1v8h-8" />
      </svg>
      <svg viewBox="0 0 28 28" className="w-[28px] h-[28px] ml-[45px]" fill="none" stroke="#fff" strokeWidth="3">
        <path d="M2 13L14 2l12 11M5 11v15h6v-9h6v9h6V11" />
      </svg>
      <div className="ml-[37px] w-[2386px] h-[72px] rounded-full border-[4px] border-[#485c82] bg-white flex items-center pl-[8px]">
        <div className="w-[182px] h-[48px] rounded-full bg-[#aca5a1] flex items-center pl-[10px] text-[24px] text-[#1f1f1f] shrink-0">
          <svg viewBox="0 0 30 26" className="w-[28px] h-[26px] mr-[8px]" fill="none" stroke="#1f1f1f" strokeWidth="2">
            <path d="M15 2l13 22H2z" />
            <path d="M15 9v8M15 19v2.5" />
          </svg>
          No seguro
        </div>
        <span className="ml-[17px] h-[36px] bg-[#46648c] text-white text-[28px] leading-[36px]">reto4.srodriguev.space</span>
        <div className="flex-1" />
        <svg viewBox="0 0 32 32" className="w-[32px] h-[32px] mr-[27px]" fill="none" stroke="#3c3c3c" strokeWidth="3.5">
          <path d="M16 3l4 9 10 1-7.500 7 2 10L16 25l-8.500 5 2-10L2 13l10-1z" />
        </svg>
      </div>
      <svg viewBox="0 0 32 32" className="w-[32px] h-[32px] ml-[37px]">
        <path d="M10 0h12l10 10v12L22 32H10L0 22V10z" fill="#d8281e" />
        <path d="M9 14v9c2 4 4 5 8 5 5 0 7-3 7-7v-9h-2v6h-1V7h-2v10h-1V5h-2v12h-1V7h-2v12h-1v-5z" fill="#fff" />
      </svg>
      <svg viewBox="0 0 32 32" className="w-[32px] h-[32px] ml-[42px]" fill="none" stroke="#fff" strokeWidth="3.5">
        <path d="M3 6h9c0-5 7-5 7 0h10v21H3v-7c5 0 5-7 0-7z" />
      </svg>
      <div className="w-[3px] h-[32px] ml-[36px] bg-[#54504c]" />
      <svg viewBox="0 0 40 40" className="w-[40px] h-[40px] ml-[32px]">
        <circle cx="20" cy="20" r="20" fill="#7c2350" />
        <path d="M20 4c5 4 4 8 2 12 6 3 8 9 4 14-3 3-4 6-4 8h-6c-1-4 0-8 2-12-4-4-6-8-3-10 2 0 4-1 5-12z" fill="#ea6f6a" />
        <path d="M14 32h12v7c-4 1-8 1-12 0z" fill="#b7c9a8" />
      </svg>
      <div className="ml-[23px] w-[373px] h-[68px] rounded-full bg-[#54504c] flex items-center pl-[25px] text-white text-[26px]">
        <span className="w-[291px] whitespace-nowrap">Reiniciar para actualizar</span>
        <div className="ml-[23px] flex flex-col gap-[6px]">
          <div className="w-[5px] h-[5px] rounded-full bg-white" />
          <div className="w-[5px] h-[5px] rounded-full bg-white" />
          <div className="w-[5px] h-[5px] rounded-full bg-white" />
        </div>
      </div>
    </div>
  );
}

function AdminBar() {
  return (
    <div className="h-[64px] mt-[2px] shrink-0 flex items-center bg-[#24272c] text-[#f0f0f1] text-[26px] tracking-[-0.3px] font-['Inter',sans-serif]">
      <svg viewBox="0 0 40 40" className="w-[40px] h-[40px] ml-[14px]" fill="none" stroke="#a3a7ab" strokeWidth="2.5">
        <circle cx="20" cy="20" r="18.5" />
        <path d="M7 14l9 21 4-13 5 13 6-15c2-5-1-7-2-9M4 14h14M22 14h9" strokeWidth="3" />
      </svg>
      <svg viewBox="0 0 32 32" className="w-[32px] h-[32px] ml-[34px]">
        <path d="M5 28A15 15 0 1 1 27 28z" fill="#a3a7ab" />
        <path d="M16 24L12 8" stroke="#24272c" strokeWidth="2.5" />
        <circle cx="9" cy="14" r="1.8" fill="#24272c" />
        <circle cx="22" cy="9" r="1.8" fill="#24272c" />
        <circle cx="26" cy="17" r="1.8" fill="#24272c" />
      </svg>
      <span className="ml-[16px]">srodriguev r4</span>
      <svg viewBox="0 0 36 32" className="w-[36px] h-[32px] ml-[30px]" fill="#a3a7ab">
        <path d="M34 0c0 6-8 15-18 19l-3-3C17 9 28 2 34 0zM11 18l4 3c0 4-3 9-11 10 3-3 1-11 7-13z" />
      </svg>
      <span className="ml-[15px]">Personalizar</span>
      <svg viewBox="0 0 36 32" className="w-[36px] h-[32px] ml-[32px]" fill="none" stroke="#a3a7ab" strokeWidth="4">
        <path d="M6 14a12 12 0 0 1 22-5M30 18a12 12 0 0 1-22 5" />
        <path d="M23 10h8V2M13 22H5v8" strokeWidth="3" />
      </svg>
      <span className="ml-[16px]">4</span>
      <svg viewBox="0 0 28 32" className="w-[28px] h-[32px] ml-[35px]" fill="#a3a7ab">
        <path d="M2 0h24a2 2 0 0 1 2 2v18a2 2 0 0 1-2 2H16l-5 10v-10H2a2 2 0 0 1-2-2V2a2 2 0 0 1 2-2z" />
      </svg>
      <span className="ml-[21px] text-[#a3a7ab]">0</span>
      <svg viewBox="0 0 26 26" className="w-[26px] h-[26px] ml-[37px]" fill="#a3a7ab">
        <path d="M10 0h6v10h10v6H16v10h-6V16H0v-6h10z" />
      </svg>
      <span className="ml-[19px]">Añadir</span>
      <div className="flex-1" />
      <span>Hola, srodriguev</span>
      <div className="ml-[13px] w-[35px] h-[36px] bg-[#b9bbbd] flex items-end justify-center overflow-hidden">
        <svg viewBox="0 0 24 30" className="w-[25px] h-[31px] fill-white">
          <ellipse cx="12" cy="10" rx="7" ry="9" />
          <path d="M0 30c0-8 6-11 12-11s12 3 12 11z" />
        </svg>
      </div>
      <svg viewBox="0 0 28 32" className="w-[28px] h-[32px] ml-[33px] mr-[18px]" fill="none" stroke="#a3a7ab" strokeWidth="3.5">
        <circle cx="12" cy="12" r="9.5" />
        <path d="M18 20l8 11" strokeWidth="4.5" />
      </svg>
    </div>
  );
}

function SiteHeader() {
  return (
    <header className="h-[200px] shrink-0 flex items-center bg-white pl-[81px] pr-[64px] font-['Inter',sans-serif]">
      <span className="text-[46px] font-bold text-black tracking-[-1px]">srodriguev r4</span>
      <span className="ml-[48px] mt-[2px] text-[36px] text-[#6d6d6d] tracking-[-0.96px]">Otro sitio realizado con WordPress</span>
      <div className="flex-1" />
      <span className="text-[36px] text-[#c22b52] -mt-[4px] tracking-[-0.96px]">Página de ejemplo</span>
      <div className="w-[2px] h-[54px] bg-[#e6e6e0] ml-[81px]" />
      <div className="ml-[62px] w-[80px] flex flex-col items-center">
        <svg viewBox="0 0 48 48" className="w-[48px] h-[48px] mt-[41px]" fill="none" stroke="#000" strokeWidth="4.5">
          <circle cx="22" cy="22" r="18.5" />
          <path d="M35 35l11 11" />
        </svg>
        <span className="text-[23px] text-[#666] mt-[13px]">Search</span>
      </div>
    </header>
  );
}

function Hero() {
  return (
    <section className="h-[1066px] shrink-0 bg-[#f5efe3] flex flex-col items-center pt-[160px] font-['Inter',sans-serif]">
      <span className="inline-block border-b-[3px] border-[#c1355a] text-[#c1355a] text-[30px] font-bold leading-[36px] tracking-[1px]">SIN CATEGORÍA</span>
      <h1 className="mt-[67px] text-[128px] leading-[140px] font-extrabold text-black tracking-[-5.6px]">¡Hola mundo!</h1>
      <div className="mt-[64px] h-[40px] flex items-center text-[33px] text-[#6d6d6d] tracking-[-1px]">
        <svg viewBox="0 0 32 36" className="w-[32px] h-[36px]" fill="none" stroke="#6d6d6d" strokeWidth="3.5">
          <circle cx="16" cy="8" r="6" />
          <path d="M2 35v-6c0-6 4-9 8-9h12c4 0 8 3 8 9v6" />
        </svg>
        <span className="ml-[21px]">By srodriguev</span>
        <svg viewBox="0 0 34 36" className="w-[34px] h-[36px] ml-[60px]" fill="none" stroke="#6d6d6d" strokeWidth="3.5">
          <rect x="2" y="6" width="30" height="28" rx="3" />
          <path d="M2 14h30M10 1v8M24 1v8" />
        </svg>
        <span className="ml-[22px]">5 mayo, 2024</span>
        <svg viewBox="0 0 34 36" className="w-[34px] h-[36px] ml-[60px]" fill="none" stroke="#6d6d6d" strokeWidth="3.5">
          <path d="M7 2h20a5 5 0 0 1 5 5v15a5 5 0 0 1-5 5H16l-7 7v-7H7a5 5 0 0 1-5-5V7a5 5 0 0 1 5-5z" />
        </svg>
        <span className="ml-[23px]">1 comentario</span>
      </div>
      <p className="self-start ml-[1100px] mt-[163px] w-[1140px] text-[44px] leading-[61px] text-black font-['Liberation_Serif',serif] tracking-[-0.17px]">
        Welcome to WordPress. This is your first post. Edit or delete it,<br />then start writing!
      </p>
      <div className="self-start ml-[1100px] mt-[66px] h-[40px] flex items-center text-[33px] text-[#6d6d6d] tracking-[-0.8px]">
        <svg viewBox="0 0 36 36" className="w-[36px] h-[36px]" fill="none" stroke="#6d6d6d" strokeWidth="3.5">
          <path d="M22 6H6a4 4 0 0 0-4 4v20a4 4 0 0 0 4 4h20a4 4 0 0 0 4-4V18" />
          <path d="M14 24l1-7L30 2l5 5-15 15z" />
        </svg>
        <span className="ml-[21px]">Edit</span>
      </div>
    </section>
  );
}

function Widgets() {
  return (
    <section className="flex-1 min-h-0 bg-white pt-[160px] pl-[480px] flex font-['Inter',sans-serif] relative overflow-hidden">
      <div className="w-[1140px] shrink-0">
        <div className="flex h-[118px]">
          <div className="w-[880px] border-2 border-[#e2e2e2] flex items-center pl-[38px] text-[32px] text-[#757575] tracking-[-0.8px]">Search ...</div>
          <div className="ml-[15px] w-[245px] bg-[#bf3957] flex items-center justify-center text-white text-[32px] font-semibold tracking-[1.5px]">SEARCH</div>
        </div>
        <h2 className="mt-[103px] text-[81px] leading-[100px] font-extrabold text-black tracking-[-5px] whitespace-nowrap">Entradas recientes</h2>
      </div>
      <div className="ml-[121px]">
        <h2 className="text-[81px] leading-[100px] font-extrabold text-black tracking-[-5px] mt-[2px]">Archivos</h2>
        <div className="mt-[56px] text-[44px] font-bold text-[#c1355a] tracking-[-2px]">mayo 2024</div>
      </div>
      <div className="absolute left-0 right-0 bottom-0 h-[80px] bg-gradient-to-b from-transparent to-black/10 [mask-image:linear-gradient(to_right,transparent,#000_140px,#000_calc(100%-60px),transparent)]" />
    </section>
  );
}

function Dock() {
  return (
    <div className="h-[116px] mt-[12px] ml-[77px] w-[3206px] shrink-0 rounded-[34px] border-2 border-[#8b7458] pl-[3px] flex items-start bg-gradient-to-r from-[#55351f] via-[#7a644b] to-[#573a21]">
      {DOCK.map((d) => (
        <DockCell key={d.key} art={d.art} dot={d.dot} />
      ))}
      <DockSep />
      {DOCK_MID.map((d) => (
        <DockCell key={d.key} art={d.art} dot />
      ))}
      <DockSep />
      {DOCK_END.map((d) => (
        <DockCell key={d.key} art={d.art} />
      ))}
    </div>
  );
}

export default function App() {
  return (
    <div className="w-[3360px] h-[2100px] overflow-hidden flex flex-col bg-gradient-to-r from-[#1e130c] via-[#a08c70] to-[#6f5230]">
      <MenuBar />
      <div className="h-[1914px] shrink-0 rounded-[22px] overflow-hidden flex flex-col relative bg-[#aca5a1] border-t-2 border-[#1a1a1a] shadow-[0_6px_14px_rgba(0,0,0,0.75)]">
        <TabStrip />
        <Toolbar />
        <AdminBar />
        <SiteHeader />
        <Hero />
        <Widgets />
      </div>
      <Dock />
    </div>
  );
}
